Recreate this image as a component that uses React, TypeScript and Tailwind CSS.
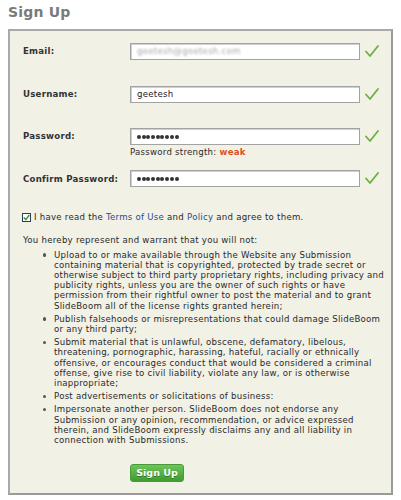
import React from "react";

const Check = () => (
  <svg width="14" height="13" viewBox="0 0 14 13" className="shrink-0">
    <path d="M1 6.5 L5 11 L13 1" fill="none" stroke="#6bb040" strokeWidth="1.8" strokeLinecap="round" strokeLinejoin="round" />
  </svg>
);

const Row = ({ label, children, mt }: { label: string; children: React.ReactNode; mt: string }) => (
  <div className={`flex items-center ${mt}`}>
    <div className="w-[107px] font-bold text-[#333]">{label}</div>
    <div className="w-[230px] h-[17px] bg-white border border-[#a3a3a3] shadow-[inset_1px_1px_0_#d0d0d0] flex items-center pl-[6px]">
      {children}
    </div>
    <div className="ml-[5px]">
      <Check />
    </div>
  </div>
);

const Dots = () => (
  <div className="flex gap-[0.7px]">
    {Array.from({ length: 9 }).map((_, i) => (
      <span key={i} className="w-[4px] h-[4px] rounded-full bg-[#333]" />
    ))}
  </div>
);

const bullets: string[][] = [
  [
    "Upload to or make available through the Website any Submission",
    "containing material that is copyrighted, protected by trade secret or",
    "otherwise subject to third party proprietary rights, including privacy and",
    "publicity rights, unless you are the owner of such rights or have",
    "permission from their rightful owner to post the material and to grant",
    "SlideBoom all of the license rights granted herein;",
  ],
  ["Publish falsehoods or misrepresentations that could damage SlideBoom", "or any third party;"],
  [
    "Submit material that is unlawful, obscene, defamatory, libelous,",
    "threatening, pornographic, harassing, hateful, racially or ethnically",
    "offensive, or encourages conduct that would be considered a criminal",
    "offense, give rise to civil liability, violate any law, or is otherwise",
    "inappropriate;",
  ],
  ["Post advertisements or solicitations of business:"],
  [
    "Impersonate another person. SlideBoom does not endorse any",
    "Submission or any opinion, recommendation, or advice expressed",
    "therein, and SlideBoom expressly disclaims any and all liability in",
    "connection with Submissions.",
  ],
];

export default function App() {
  return (
    <div className="w-[401px] h-[500px] bg-white font-['DejaVu_Sans',sans-serif] text-[8.6px] leading-[10.2px] tracking-[0.25px] text-[#2a2a2a] overflow-hidden">
      <div className="pl-[8px] pt-[4px] h-[29px] text-[14px] leading-[17px] tracking-[0.2px] font-bold text-[#7a7a7a]">Sign Up</div>
      <div className="ml-[8px] w-[385px] h-[466px] border-2 border-[#a9a9a9] border-r-[#9a9a9a] border-b-[#9a9a9a] bg-[#f1f1e6] pl-[13px]">
        <Row label="Email:" mt="mt-[12px]">
          <span className="text-[#a8a8a8] blur-[1.3px]">geetesh@geetesh.com</span>
        </Row>
        <Row label="Username:" mt="mt-[26px]">
          <span className="text-[#222]">geetesh</span>
        </Row>
        <Row label="Password:" mt="mt-[25px]">
          <Dots />
        </Row>
        <div className="ml-[107px] mt-[2px]">
          Password strength: <span className="font-bold text-[#e0521c]">weak</span>
        </div>
        <Row label="Confirm Password:" mt="mt-[13px]">
          <Dots />
        </Row>
        <div className="mt-[25px] flex items-center">
          <span className="w-[9px] h-[9px] border border-[#2d3a55] bg-white flex items-center justify-center mr-[3px] ml-[-1px]">
            <svg width="7" height="7" viewBox="0 0 7 7">
              <path d="M0.8 3.5 L2.8 5.6 L6.3 1" fill="none" stroke="#3a9a2a" strokeWidth="1.5" />
            </svg>
          </span>
          <span>
            I have read the <span className="text-[#1d4f8f]">Terms of Use</span> and{" "}
            <span className="text-[#1d4f8f]">Policy</span> and agree to them.
          </span>
        </div>
        <div className="mt-[13px]">You hereby represent and warrant that you will not:</div>
        <ul className="mt-[4px] flex flex-col gap-[3px]">
          {bullets.map((lines, i) => (
            <li key={i} className="flex">
              <span className="w-[31px] shrink-0 flex justify-end pr-[8px] pt-[3.5px]">
                <span className="w-[3.5px] h-[3.5px] rounded-full bg-[#555]" />
              </span>
              <span className="w-[335px] whitespace-nowrap">
                {lines.map((l, j) => (
                  <React.Fragment key={j}>
                    {l}
                    {j < lines.length - 1 && <br />}
                  </React.Fragment>
                ))}
              </span>
            </li>
          ))}
        </ul>
        <div className="mt-[19px] ml-[107px]">
          <button className="w-[54px] h-[18px] rounded-[3px] border border-[#4a9a3a] bg-gradient-to-b from-[#6cc55a] to-[#3f9c30] text-white font-bold text-[9.5px] leading-[16px] tracking-normal [text-shadow:0_1px_0_#2f7a22]">
            Sign Up
          </button>
        </div>
      </div>
    </div>
  );
}
